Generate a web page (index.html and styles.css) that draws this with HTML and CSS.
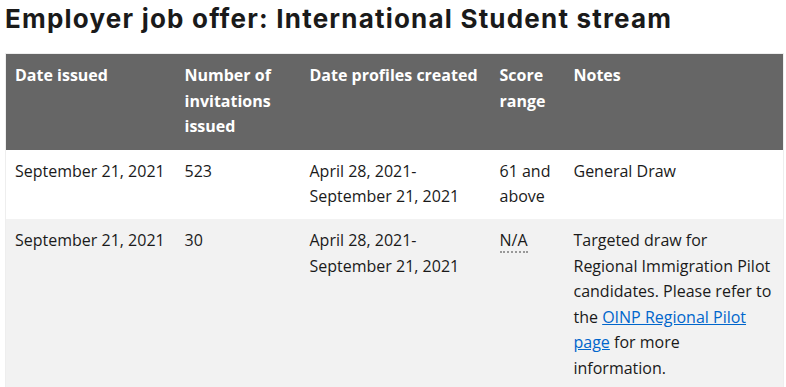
FILE: index.html
```html
<!DOCTYPE html>
<html lang="en">
<head>
<meta charset="UTF-8">
<title>Employer job offer: International Student stream</title>
<link rel="stylesheet" href="styles.css">
</head>
<body>

<h2 class="section-title">Employer job offer: International Student stream</h2>

<table class="draws">
  <colgroup>
    <col class="c-date">
    <col class="c-num">
    <col class="c-range">
    <col class="c-score">
    <col class="c-notes">
  </colgroup>
  <thead>
    <tr>
      <th>Date issued</th>
      <th>Number of invitations issued</th>
      <th>Date profiles created</th>
      <th>Score range</th>
      <th>Notes</th>
    </tr>
  </thead>
  <tbody>
    <tr>
      <td>September 21, 2021</td>
      <td>523</td>
      <td>April 28, 2021-September 21, 2021</td>
      <td>61 and above</td>
      <td>General Draw</td>
    </tr>
    <tr>
      <td>September 21, 2021</td>
      <td>30</td>
      <td>April 28, 2021-September 21, 2021</td>
      <td><abbr title="Not applicable">N/A</abbr></td>
      <td>Targeted draw for Regional Immigration Pilot candidates. Please refer to the <a href="#">OINP Regional Pilot page</a> for more information.</td>
    </tr>
  </tbody>
</table>

</body>
</html>
```

FILE: styles.css
```css
* {
  box-sizing: border-box;
}

body {
  margin: 0;
  padding: 0 5px;
  font-family: 'Open Sans', sans-serif;
  color: #1a1a1a;
  background: #fff;
}

.section-title {
  font-family: 'Inter', sans-serif;
  font-weight: 700;
  font-size: 26px;
  letter-spacing: 1.2px;
  line-height: 38px;
  margin: 0 0 15px;
  color: #1a1a1a;
}

.draws {
  width: 778px;
  table-layout: fixed;
  border-collapse: collapse;
  border: 1px solid #eee;
  font-size: 16px;
  line-height: 1.6;
}

.c-date { width: 169px; }
.c-num { width: 125px; }
.c-range { width: 190px; }
.c-score { width: 74px; }
.c-notes { width: 220px; }

.draws th,
.draws td {
  text-align: left;
  vertical-align: top;
  padding: 9px 8px 9px 10px;
}

.draws th:first-child,
.draws td:first-child {
  padding-left: 9px;
}

.draws th {
  background: #666;
  color: #fff;
  font-weight: 700;
  padding-bottom: 10px;
}

.draws tbody tr:nth-child(even) {
  background: #f2f2f2;
}

.draws abbr {
  text-decoration: none;
  border-bottom: 2px dotted #999;
}

.draws a {
  color: #0066cc;
}
```
